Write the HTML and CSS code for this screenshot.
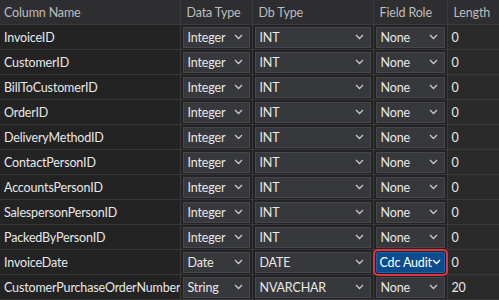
FILE: index.html
```html
<!DOCTYPE html>
<html>
<head>
    <meta charset="UTF-8">
    <title>Column Mapping</title>
    <link rel="stylesheet" href="styles.css">
</head>
<body>
    <table class="grid">
        <colgroup>
            <col class="c-name">
            <col class="c-data">
            <col class="c-db">
            <col class="c-role">
            <col class="c-len">
        </colgroup>
        <thead>
            <tr>
                <th>Column Name</th>
                <th>Data Type</th>
                <th>Db Type</th>
                <th>Field Role</th>
                <th>Length</th>
            </tr>
        </thead>
        <tbody id="rows"></tbody>
    </table>

    <script>
        var rows = [
            ['InvoiceID', 'Integer', 'INT', 'None', '0'],
            ['CustomerID', 'Integer', 'INT', 'None', '0'],
            ['BillToCustomerID', 'Integer', 'INT', 'None', '0'],
            ['OrderID', 'Integer', 'INT', 'None', '0'],
            ['DeliveryMethodID', 'Integer', 'INT', 'None', '0'],
            ['ContactPersonID', 'Integer', 'INT', 'None', '0'],
            ['AccountsPersonID', 'Integer', 'INT', 'None', '0'],
            ['SalespersonPersonID', 'Integer', 'INT', 'None', '0'],
            ['PackedByPersonID', 'Integer', 'INT', 'None', '0'],
            ['InvoiceDate', 'Date', 'DATE', 'Cdc Audit', '0'],
            ['CustomerPurchaseOrderNumber', 'String', 'NVARCHAR', 'None', '20']
        ];

        var chevron = '<svg class="chev" width="9" height="6" viewBox="0 0 9 6"><path d="M1 1 L4.5 4.5 L8 1" fill="none" stroke="currentColor" stroke-width="1.3"/></svg>';

        function dropdown(text, extra) {
            return '<div class="select ' + (extra || '') + '"><span>' + text + '</span>' + chevron + '</div>';
        }

        var html = '';
        rows.forEach(function (r) {
            var picked = r[3] !== 'None' ? 'picked' : '';
            html += '<tr>' +
                '<td class="name">' + r[0] + '</td>' +
                '<td>' + dropdown(r[1]) + '</td>' +
                '<td>' + dropdown(r[2]) + '</td>' +
                '<td class="role">' + dropdown(r[3], picked) + '</td>' +
                '<td class="len">' + r[4] + '</td>' +
                '</tr>';
        });
        document.getElementById('rows').innerHTML = html;
    </script>
</body>
</html>
```

FILE: styles.css
```css
body {
    margin: 0;
    padding: 0;
    background-color: #252526;
    font-family: Lato, "Noto Sans", sans-serif;
    font-size: 12.5px;
    letter-spacing: -0.15px;
    color: #e6e6e6;
    overflow: hidden;
}

.grid {
    border-collapse: collapse;
    table-layout: fixed;
    width: 499px;
}

.c-name { width: 180px; }
.c-data { width: 72px; }
.c-db   { width: 121px; }
.c-role { width: 74px; }
.c-len  { width: 52px; }

.grid th {
    height: 24px;
    padding: 0 0 0 6px;
    text-align: left;
    font-weight: normal;
    color: #bdbdbd;
    background-color: #2e2e30;
    border-right: 1px solid #3a3a3c;
    border-bottom: 1px solid #3a3a3c;
    white-space: nowrap;
    overflow: hidden;
}

.grid th:first-child {
    padding-left: 4px;
}

.grid th:last-child,
.grid td:last-child {
    border-right: none;
}

.grid td {
    height: 24px;
    padding: 0 2px;
    background-color: #232324;
    border-right: 1px solid #3a3a3c;
    border-bottom: 1px solid #38383a;
    white-space: nowrap;
}

.grid td.name {
    padding-left: 4px;
    color: #e8e8e8;
    overflow: hidden;
}

.grid td.role {
    padding: 0 2px;
}

.grid td.len {
    padding-left: 4px;
    background-color: #2a2a2b;
}

.select {
    display: flex;
    align-items: center;
    justify-content: space-between;
    height: 19px;
    padding: 0 6px 0 4px;
    background-color: #37383b;
    border: 1px solid #46474a;
    color: #e8e8e8;
}

.select .chev {
    flex: none;
    color: #c8c8c8;
}

.select.picked {
    position: relative;
    padding: 0 3px;
    background-color: #0b4c8c;
    border-color: #1565b0;
    color: #ffffff;
    border-radius: 2px;
}

/* red highlight ring drawn over the cell */
.select.picked::after {
    content: "";
    position: absolute;
    top: -4px;
    left: -4px;
    right: -4px;
    bottom: -4px;
    border: 2px solid #e5323f;
    border-radius: 5px;
}

.select.picked .chev {
    color: #ffffff;
}
```
